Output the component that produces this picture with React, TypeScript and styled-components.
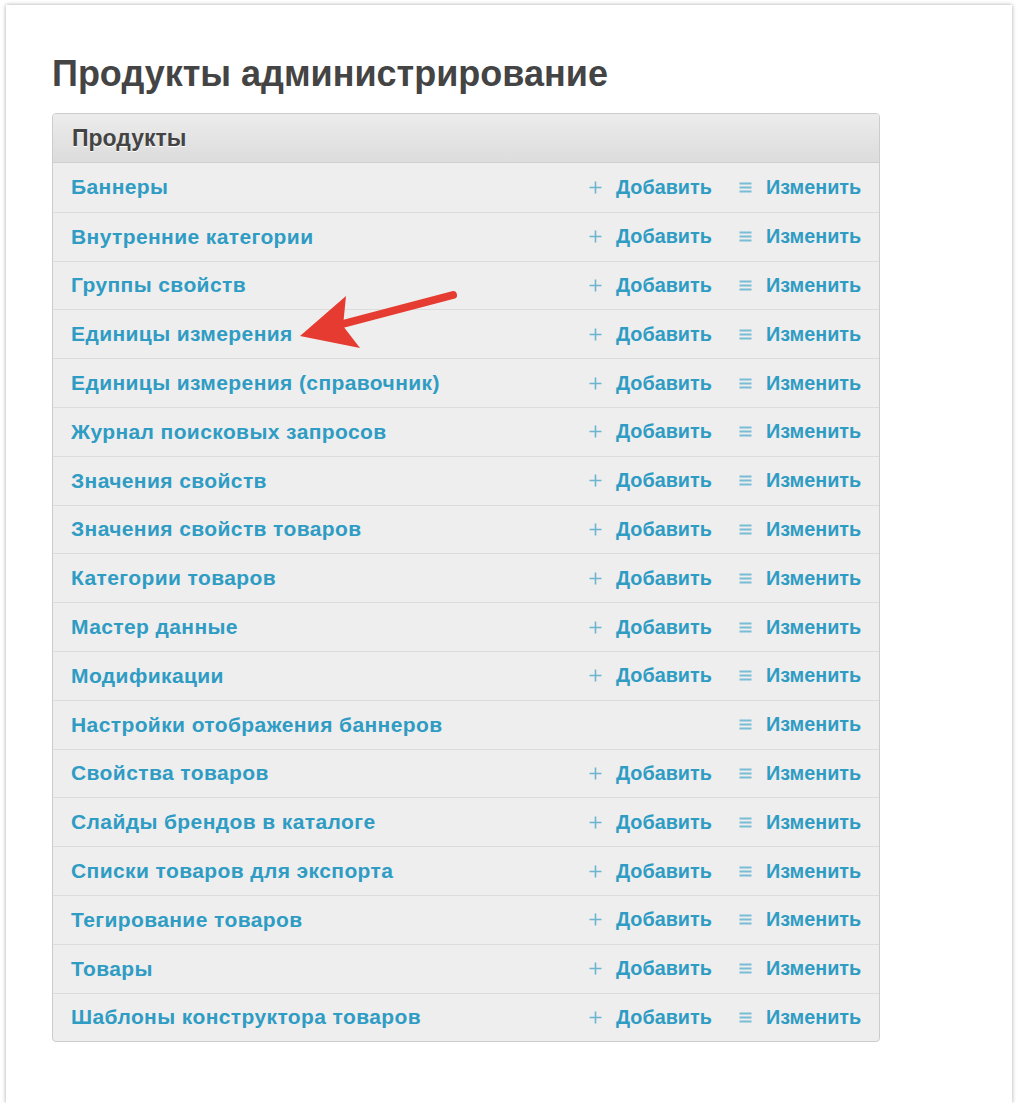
import React from "react";
import styled, { createGlobalStyle } from "styled-components";

const Global = createGlobalStyle`
  html, body { margin: 0; padding: 0; background: #ffffff; }
  body { font-family: "Liberation Sans", Arial, Helvetica, sans-serif; }
`;

const Frame = styled.div`
  position: relative;
  box-sizing: border-box;
  margin: 5px 0 0 6px;
  width: 1006px;
  height: 1098px;
  background: #fff;
  box-shadow: 0 0 4px rgba(0, 0, 0, 0.35);
  padding: 47px 0 0 46px;
`;

const Title = styled.h1`
  margin: 0 0 17px;
  font-size: 36px;
  line-height: 44px;
  font-weight: bold;
  color: #444444;
`;

const Panel = styled.div`
  box-sizing: border-box;
  width: 828px;
  border: 1px solid #cccccc;
  border-radius: 4px;
  overflow: hidden;
  background: #eeeeee;
`;

const Header = styled.div`
  box-sizing: border-box;
  height: 49px;
  padding: 0 19px;
  display: flex;
  align-items: center;
  background: linear-gradient(#ececec, #dcdcdc);
  border-bottom: 1px solid #cfcfcf;
  font-size: 23px;
  font-weight: bold;
  color: #444444;
  text-shadow: 0 1px 0 #ffffff;
`;

const Row = styled.div<{ $first?: boolean }>`
  box-sizing: border-box;
  height: 48.8px;
  padding: 0 19px 0 18px;
  display: grid;
  grid-template-columns: 1fr 123px 121px;
  column-gap: 27px;
  align-items: center;
  border-top: ${(p) => (p.$first ? "none" : "1px solid #dcdcdc")};
  font-weight: bold;
`;

const Name = styled.a`
  font-size: 21px;
  letter-spacing: 0.4px;
  color: #2f9cc4;
  text-decoration: none;
  white-space: nowrap;
`;

const Action = styled.a`
  display: flex;
  align-items: center;
  gap: 14px;
  font-size: 19.8px;
  color: #2f9cc4;
  text-decoration: none;
  white-space: nowrap;
`;

const Icon = styled.svg`
  flex: none;
  width: 13px;
  height: 13px;
`;

const ArrowLayer = styled.svg`
  position: absolute;
  left: 0;
  top: 0;
  pointer-events: none;
`;

const PlusIcon = () => (
  <Icon viewBox="0 0 13 13">
    <path d="M6.5 0.5V12.5M0.5 6.5H12.5" stroke="#6cb4d0" strokeWidth="1.6" fill="none" />
  </Icon>
);

const ListIcon = () => (
  <Icon viewBox="0 0 13 13">
    <path d="M0.5 2.5H12.5M0.5 6.5H12.5M0.5 10.5H12.5" stroke="#79bcd6" strokeWidth="1.8" fill="none" />
  </Icon>
);

const items: { name: string; add: boolean }[] = [
  { name: "Баннеры", add: true },
  { name: "Внутренние категории", add: true },
  { name: "Группы свойств", add: true },
  { name: "Единицы измерения", add: true },
  { name: "Единицы измерения (справочник)", add: true },
  { name: "Журнал поисковых запросов", add: true },
  { name: "Значения свойств", add: true },
  { name: "Значения свойств товаров", add: true },
  { name: "Категории товаров", add: true },
  { name: "Мастер данные", add: true },
  { name: "Модификации", add: true },
  { name: "Настройки отображения баннеров", add: false },
  { name: "Свойства товаров", add: true },
  { name: "Слайды брендов в каталоге", add: true },
  { name: "Списки товаров для экспорта", add: true },
  { name: "Тегирование товаров", add: true },
  { name: "Товары", add: true },
  { name: "Шаблоны конструктора товаров", add: true },
];

export default function App() {
  return (
    <>
      <Global />
      <Frame>
        <Title>Продукты администрирование</Title>
        <Panel>
          <Header>Продукты</Header>
          {items.map((it, i) => (
            <Row key={it.name} $first={i === 0}>
              <Name href="#">{it.name}</Name>
              {it.add ? (
                <Action href="#">
                  <PlusIcon />
                  Добавить
                </Action>
              ) : (
                <span />
              )}
              <Action href="#">
                <ListIcon />
                Изменить
              </Action>
            </Row>
          ))}
        </Panel>
        <ArrowLayer width="1006" height="1098" viewBox="6 5 1006 1098">
          <line x1="453" y1="295" x2="335" y2="326" stroke="#e53b30" strokeWidth="8" strokeLinecap="round" />
          <polygon points="300,336 346,296 343,326 360,348" fill="#e53b30" />
        </ArrowLayer>
      </Frame>
    </>
  );
}
